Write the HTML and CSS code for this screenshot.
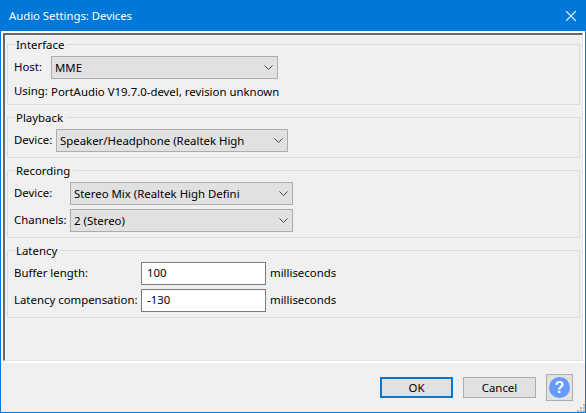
FILE: index.html
```html
<!DOCTYPE html>
<html lang="en">
<head>
  <meta charset="UTF-8">
  <meta name="viewport" content="width=device-width, initial-scale=1.0">
  <title>Audio Settings: Devices</title>
  <link rel="stylesheet" href="styles.css">
</head>
<body>
  <div class="window">
    <div class="titlebar">
      <span class="title">Audio Settings: Devices</span>
      <svg class="close" width="10" height="10" viewBox="0 0 10 10"><path d="M0 0L10 10M10 0L0 10" stroke="#fff" stroke-width="1.1" fill="none"/></svg>
    </div>

    <div class="panel">
      <div class="panel-inner">
        <fieldset class="group group-interface">
          <legend>Interface</legend>
          <div class="row">
            <label class="label label-host">Host:</label>
            <div class="combo combo-host">
              <span>MME</span>
              <svg class="chevron" width="9" height="5" viewBox="0 0 9 5"><path d="M0.5 0.5L4.5 4.5L8.5 0.5" stroke="#444" fill="none"/></svg>
            </div>
          </div>
          <div class="row row-text">
            <span class="label label-host">Using:</span>
            <span>PortAudio V19.7.0-devel, revision unknown</span>
          </div>
        </fieldset>

        <fieldset class="group group-playback">
          <legend>Playback</legend>
          <div class="row">
            <label class="label label-playback">Device:</label>
            <div class="combo combo-playback">
              <span>Speaker/Headphone (Realtek High</span>
              <svg class="chevron" width="9" height="5" viewBox="0 0 9 5"><path d="M0.5 0.5L4.5 4.5L8.5 0.5" stroke="#444" fill="none"/></svg>
            </div>
          </div>
        </fieldset>

        <fieldset class="group group-recording">
          <legend>Recording</legend>
          <div class="row">
            <label class="label label-recording">Device:</label>
            <div class="combo combo-recording">
              <span>Stereo Mix (Realtek High Defini</span>
              <svg class="chevron" width="9" height="5" viewBox="0 0 9 5"><path d="M0.5 0.5L4.5 4.5L8.5 0.5" stroke="#444" fill="none"/></svg>
            </div>
          </div>
          <div class="row">
            <label class="label label-recording">Channels:</label>
            <div class="combo combo-recording">
              <span>2 (Stereo)</span>
              <svg class="chevron" width="9" height="5" viewBox="0 0 9 5"><path d="M0.5 0.5L4.5 4.5L8.5 0.5" stroke="#444" fill="none"/></svg>
            </div>
          </div>
        </fieldset>

        <fieldset class="group group-latency">
          <legend>Latency</legend>
          <div class="row">
            <label class="label label-latency" for="buffer">Buffer length:</label>
            <input class="field" id="buffer" type="text" value="100">
            <span class="unit">milliseconds</span>
          </div>
          <div class="row">
            <label class="label label-latency" for="compensation">Latency compensation:</label>
            <input class="field" id="compensation" type="text" value="-130">
            <span class="unit">milliseconds</span>
          </div>
        </fieldset>
      </div>
    </div>

    <div class="footer">
      <button class="btn btn-default" type="button">OK</button>
      <button class="btn" type="button">Cancel</button>
      <button class="btn-help" type="button"><span class="help-circle">?</span></button>
    </div>
    <svg class="grip" width="8" height="8" viewBox="0 0 8 8"><path d="M6 0h2v2H6zM3 3h2v2H3zM6 3h2v2H6zM0 6h2v2H0zM3 6h2v2H3zM6 6h2v2H6z" fill="#b8b8b8"/></svg>
  </div>
</body>
</html>
```

FILE: styles.css
```css
html, body {
  margin: 0;
  padding: 0;
}
body {
  width: 586px;
  height: 413px;
  overflow: hidden;
  font-family: "Noto Sans", "Open Sans", sans-serif;
  font-size: 11.4px;
  color: #000;
}
.window {
  position: relative;
  box-sizing: border-box;
  width: 586px;
  height: 413px;
  background-color: #f0f0f0;
  border: 1px solid #0078d7;
  border-top: none;
  display: flex;
  flex-direction: column;
}
.titlebar {
  height: 31px;
  flex: none;
  background-color: #0078d7;
  color: #fff;
  display: flex;
  align-items: center;
  justify-content: space-between;
  padding: 0 10px 0 9px;
  margin: 0 -1px;
  font-size: 11.3px;
}
.panel {
  height: 332px;
  box-sizing: border-box;
  flex: none;
  border: 2px solid #fff;
}
.panel-inner {
  height: 100%;
  box-sizing: border-box;
  border-top: 2px solid #696969;
  border-left: 2px solid #696969;
  border-right: 1px solid #e3e3e3;
  border-bottom: 1px solid #e3e3e3;
  padding: 0 2px;
}
.group {
  box-sizing: border-box;
  margin: 0 0 3px 0;
  padding: 3px 7px 0 7px;
  min-width: 0;
  border: 1px solid #dcdcdc;
}
.group legend {
  padding: 2px 3px 0 1px;
  margin-left: 0;
  line-height: 16px;
}
.group-interface { height: 70px; }
.group-playback { height: 50px; }
.group-recording { height: 77px; }
.group-latency { height: 77px; }
.row {
  display: flex;
  align-items: center;
  height: 23px;
  margin-bottom: 4px;
  margin-left: -1px;
}
.row-text {
  height: 16px;
}
.label {
  flex: none;
  white-space: nowrap;
  padding-bottom: 2px;
}
.label-host { width: 37px; }
.label-playback { width: 42px; }
.label-recording { width: 56px; }
.label-latency { width: 127px; }
.combo {
  box-sizing: border-box;
  height: 23px;
  background-color: #e1e1e1;
  border: 1px solid #adadad;
  display: flex;
  align-items: center;
  justify-content: space-between;
  padding: 0 4px 0 3px;
}
.combo-host { width: 227px; }
.combo-playback { width: 232px; }
.combo-recording { width: 223px; }
.field {
  box-sizing: border-box;
  width: 125px;
  height: 23px;
  border: 1px solid #7a7a7a;
  background-color: #fff;
  padding: 0 5px 2px 5px;
  margin: 0;
  font: inherit;
  color: #000;
}
.unit {
  margin-left: 4px;
  padding-bottom: 2px;
}
.footer {
  flex: 1;
  display: flex;
  align-items: flex-start;
  justify-content: flex-end;
  padding: 11px 12px 0 0;
}
.btn {
  box-sizing: border-box;
  width: 73px;
  height: 21px;
  margin: 3px 10px 0 0;
  padding: 0;
  background-color: #e1e1e1;
  border: 1px solid #adadad;
  font: inherit;
  color: #000;
}
.btn-default {
  border: 2px solid #0078d7;
}
.btn-help {
  box-sizing: border-box;
  width: 27px;
  height: 27px;
  padding: 0;
  background-color: #e1e1e1;
  border: 1px solid #adadad;
  display: flex;
  align-items: center;
  justify-content: center;
}
.help-circle {
  width: 21px;
  height: 21px;
  border-radius: 50%;
  background-color: #6699ff;
  color: #fff;
  font-size: 16px;
  font-weight: bold;
  line-height: 21px;
  text-align: center;
}
.grip {
  position: absolute;
  right: 0;
  bottom: 0;
}
```
